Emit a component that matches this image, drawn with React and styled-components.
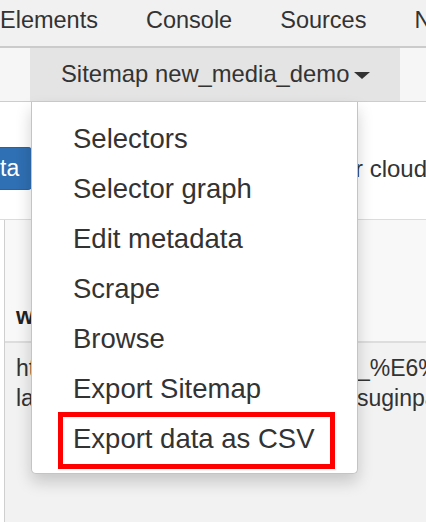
import React from 'react';
import styled, { createGlobalStyle } from 'styled-components';

const GlobalStyle = createGlobalStyle`
  html, body {
    margin: 0;
    padding: 0;
    width: 426px;
    height: 522px;
    overflow: hidden;
    background: #ffffff;
    font-family: "Liberation Sans", Arial, sans-serif;
    color: #333333;
  }
`;

const MENU_ITEMS = [
  'Selectors',
  'Selector graph',
  'Edit metadata',
  'Scrape',
  'Browse',
  'Export Sitemap',
  'Export data as CSV',
];

const Page = styled.div`
  display: flex;
  flex-direction: column;
  width: 426px;
  height: 522px;
  overflow: hidden;
`;

const DevtoolsTabs = styled.div`
  display: flex;
  align-items: center;
  gap: 48px;
  height: 48px;
  padding-bottom: 6px;
  box-sizing: border-box;
  background: #f1f1f1;
  border-bottom: 2px solid #cbcbcb;
  white-space: nowrap;
`;

const DevtoolsTab = styled.span`
  font-size: 23.5px;
  color: #333333;
`;

const SubBar = styled.div`
  display: flex;
  height: 54px;
  box-sizing: border-box;
  border-bottom: 1px solid #cdcdcd;
`;

const SubBarSide = styled.div`
  width: ${(p) => (p.$grow ? 'auto' : '30px')};
  flex: ${(p) => (p.$grow ? '1' : 'none')};
  background: #f6f6f6;
`;

const SitemapTab = styled.div`
  display: flex;
  align-items: center;
  gap: 5px;
  padding: 0 30px 1px 31px;
  background: #e4e4e4;
  font-size: 23.8px;
  color: #333333;
  white-space: nowrap;
`;

const Caret = styled.span`
  width: 0;
  height: 0;
  margin-top: 3px;
  border-left: 8px solid transparent;
  border-right: 8px solid transparent;
  border-top: 7px solid #333333;
`;

const Content = styled.div`
  position: relative;
  flex: 1;
  display: flex;
  flex-direction: column;
`;

const ActionRow = styled.div`
  display: flex;
  align-items: center;
  justify-content: space-between;
  height: 118px;
  padding-top: 45px;
  padding-bottom: 30px;
  box-sizing: border-box;
  border-bottom: 1px solid #dcdcdc;
  background: #ffffff;
`;

const PrimaryButton = styled.div`
  display: flex;
  align-items: center;
  height: 43px;
  padding: 0 13px 0 0;
  background: #2f6fb3;
  border: 1px solid #2a62a0;
  border-left: none;
  border-radius: 0 5px 5px 0;
  color: #ffffff;
  font-size: 23px;
  box-sizing: border-box;
`;

const HintText = styled.span`
  margin-top: 2px;
  width: 71px;
  overflow: hidden;
  white-space: nowrap;
  font-size: 24px;
  color: #333333;
`;

const Table = styled.div`
  flex: 1;
  display: flex;
  flex-direction: column;
  margin-left: 4px;
  border-left: 1px solid #cfcfcf;
`;

const HeaderRow = styled.div`
  display: flex;
  align-items: flex-end;
  height: 123px;
  padding: 0 0 11px 11px;
  box-sizing: border-box;
  background: #f8f8f8;
  border-bottom: 2px solid #dddddd;
  font-size: 23px;
  font-weight: bold;
  color: #222222;
`;

const Body = styled.div`
  flex: 1;
  padding-top: 10px;
  background: #f2f2f2;
`;

const CellLine = styled.div`
  display: grid;
  grid-template-columns: 338px 1fr;
  height: 30px;
  line-height: 30px;
  font-size: 23px;
  color: #333333;
  white-space: nowrap;
  overflow: hidden;
`;

const CellPart = styled.span`
  overflow: hidden;
  padding-left: ${(p) => (p.$right ? '14px' : '11px')};
`;

const Menu = styled.ul`
  position: absolute;
  top: 0;
  left: 31px;
  width: 327px;
  margin: 0;
  padding: 12px 0 9px;
  box-sizing: border-box;
  list-style: none;
  background: #ffffff;
  border: 1px solid #c4c4c4;
  border-top: none;
  border-radius: 0 0 5px 5px;
  box-shadow: 0 8px 16px rgba(0, 0, 0, 0.18);
`;

const MenuItem = styled.li`
  position: relative;
  height: 50px;
  line-height: 50px;
  padding-left: 41px;
  font-size: 27.5px;
  color: #333333;
  white-space: nowrap;

  &::after {
    content: '';
    display: ${(p) => (p.$marked ? 'block' : 'none')};
    position: absolute;
    top: -2px;
    bottom: -5px;
    left: 26px;
    right: 22px;
    border: 5px solid #ff0000;
  }
`;

export default function App() {
  return (
    <>
      <GlobalStyle />
      <Page>
        <DevtoolsTabs>
          <DevtoolsTab>Elements</DevtoolsTab>
          <DevtoolsTab>Console</DevtoolsTab>
          <DevtoolsTab>Sources</DevtoolsTab>
          <DevtoolsTab>Network</DevtoolsTab>
        </DevtoolsTabs>

        <SubBar>
          <SubBarSide />
          <SitemapTab>
            Sitemap new_media_demo
            <Caret />
          </SitemapTab>
          <SubBarSide $grow />
        </SubBar>

        <Content>
          <ActionRow>
            <PrimaryButton>ta</PrimaryButton>
            <HintText>r cloud</HintText>
          </ActionRow>

          <Table>
            <HeaderRow>web-scraper-order</HeaderRow>
            <Body>
              <CellLine>
                <CellPart>https://www.example.com/news/</CellPart>
                <CellPart $right>_%E6%96%B0</CellPart>
              </CellLine>
              <CellLine>
                <CellPart>latest-media-list</CellPart>
                <CellPart $right>suginpa</CellPart>
              </CellLine>
            </Body>
          </Table>

          <Menu>
            {MENU_ITEMS.map((item, i) => (
              <MenuItem key={item} $marked={i === MENU_ITEMS.length - 1}>
                {item}
              </MenuItem>
            ))}
          </Menu>
        </Content>
      </Page>
    </>
  );
}
